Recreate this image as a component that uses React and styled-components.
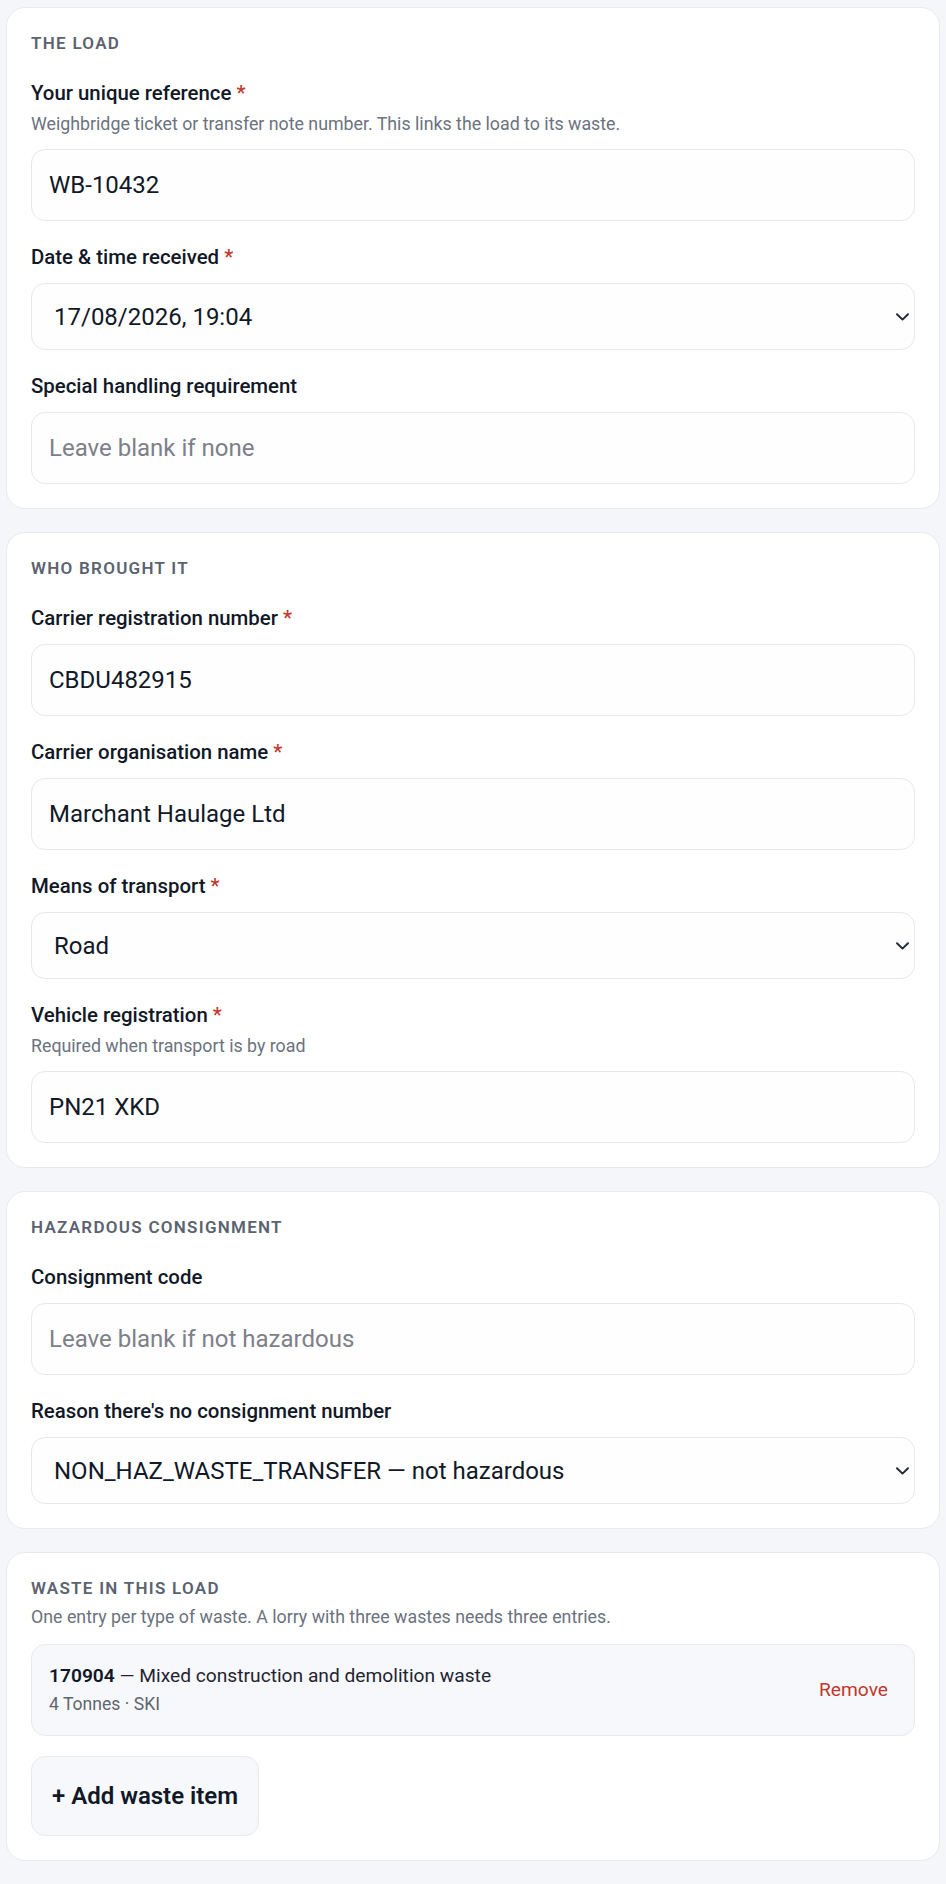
import React from 'react'
import styled, { createGlobalStyle } from 'styled-components'

const GlobalStyle = createGlobalStyle`
    * { box-sizing: border-box; }
    body {
        margin: 0;
        background: #f5f6fa;
        font-family: Roboto, "Liberation Sans", Arial, sans-serif;
        color: #111827;
    }
`

function Chevron() {
    return (
        <svg width="13" height="8" viewBox="0 0 13 8" fill="none">
            <path d="M1 1.2L6.5 6.6L12 1.2" stroke="#1f2937" strokeWidth="1.9" strokeLinecap="round" strokeLinejoin="round" />
        </svg>
    )
}

function Field({ label, required, hint, children }) {
    return (
        <FieldStyled>
            <Label>
                {label}
                {required && <Req> *</Req>}
            </Label>
            {hint && <Hint>{hint}</Hint>}
            <Control>{children}</Control>
        </FieldStyled>
    )
}

function SelectBox({ value }) {
    return (
        <SelectWrap>
            <Select defaultValue={value}>
                <option value={value}>{value}</option>
            </Select>
            <ChevronSlot><Chevron /></ChevronSlot>
        </SelectWrap>
    )
}

function App() {
    return (
        <Page>
            <GlobalStyle />
            <Card>
                <CardTitle>The load</CardTitle>
                <Fields>
                    <Field label="Your unique reference" required hint="Weighbridge ticket or transfer note number. This links the load to its waste.">
                        <Input defaultValue="WB-10432" />
                    </Field>
                    <Field label="Date & time received" required>
                        <SelectBox value="17/08/2026, 19:04" />
                    </Field>
                    <Field label="Special handling requirement">
                        <Input placeholder="Leave blank if none" />
                    </Field>
                </Fields>
            </Card>

            <Card>
                <CardTitle>Who brought it</CardTitle>
                <Fields>
                    <Field label="Carrier registration number" required>
                        <Input defaultValue="CBDU482915" />
                    </Field>
                    <Field label="Carrier organisation name" required>
                        <Input defaultValue="Marchant Haulage Ltd" />
                    </Field>
                    <Field label="Means of transport" required>
                        <SelectBox value="Road" />
                    </Field>
                    <Field label="Vehicle registration" required hint="Required when transport is by road">
                        <Input defaultValue="PN21 XKD" />
                    </Field>
                </Fields>
            </Card>

            <Card>
                <CardTitle>Hazardous consignment</CardTitle>
                <Fields>
                    <Field label="Consignment code">
                        <Input placeholder="Leave blank if not hazardous" />
                    </Field>
                    <Field label="Reason there's no consignment number">
                        <SelectBox value="NON_HAZ_WASTE_TRANSFER — not hazardous" />
                    </Field>
                </Fields>
            </Card>

            <Card>
                <CardTitle $tight>Waste in this load</CardTitle>
                <CardHint>One entry per type of waste. A lorry with three wastes needs three entries.</CardHint>
                <WasteItem>
                    <WasteInfo>
                        <WasteName><strong>170904</strong> — Mixed construction and demolition waste</WasteName>
                        <WasteMeta>4 Tonnes · SKI</WasteMeta>
                    </WasteInfo>
                    <RemoveButton type="button">Remove</RemoveButton>
                </WasteItem>
                <AddButton type="button">+ Add waste item</AddButton>
            </Card>
        </Page>
    )
}

const Page = styled.div`
    padding: 7px 6px 23px;
    display: flex;
    flex-direction: column;
    gap: 23px;
`

const Card = styled.section`
    background: #ffffff;
    border: 1px solid #e8eaf0;
    border-radius: 19px;
    padding: 24px;
    display: flex;
    flex-direction: column;
    align-items: flex-start;
`

const CardTitle = styled.h2`
    margin: 1px 0 ${p => (p.$tight ? '8px' : '28px')};
    font-size: 17px;
    line-height: 20px;
    font-weight: 600;
    letter-spacing: 0.075em;
    text-transform: uppercase;
    color: #5b6270;
`

const CardHint = styled.p`
    margin: 0 0 16px;
    font-size: 17.8px;
    line-height: 22px;
    color: #6b7280;
`

const Fields = styled.div`
    align-self: stretch;
    display: flex;
    flex-direction: column;
    gap: 24px;
`

const FieldStyled = styled.div`
    display: flex;
    flex-direction: column;
`

const Label = styled.label`
    font-size: 20.4px;
    line-height: 24px;
    font-weight: 500;
    color: #111827;
`

const Req = styled.span`
    color: #c0392b;
`

const Hint = styled.div`
    margin-top: 8px;
    font-size: 17.8px;
    line-height: 22px;
    color: #6b7280;
`

const Control = styled.div`
    margin-top: 14px;
`

const Input = styled.input`
    display: block;
    width: 100%;
    height: 72px;
    padding: 0 17px;
    border: 1px solid #e6e8ee;
    border-radius: 14px;
    background: #fefefe;
    font-family: Roboto, "Liberation Sans", Arial, sans-serif;
    font-size: 24px;
    color: #111827;
    outline: none;
    &::placeholder {
        color: #7d8089;
    }
`

const SelectWrap = styled.div`
    position: relative;
`

const Select = styled.select`
    display: block;
    width: 100%;
    height: 67px;
    padding: 0 40px 0 22px;
    border: 1px solid #e6e8ee;
    border-radius: 14px;
    background: #fefefe;
    font-family: Roboto, "Liberation Sans", Arial, sans-serif;
    font-size: 24px;
    color: #111827;
    appearance: none;
    -webkit-appearance: none;
    outline: none;
`

const ChevronSlot = styled.span`
    position: absolute;
    right: 6px;
    top: 50%;
    transform: translateY(-50%);
    display: flex;
    pointer-events: none;
    & > svg { display: block; }
`

const WasteItem = styled.div`
    align-self: stretch;
    display: flex;
    align-items: center;
    justify-content: space-between;
    padding: 19px 18px 20px 17px;
    background: #f7f8fb;
    border: 1px solid #e8eaf0;
    border-radius: 14px;
`

const WasteInfo = styled.div`
    display: flex;
    flex-direction: column;
    gap: 5px;
`

const WasteName = styled.div`
    font-size: 19.2px;
    line-height: 24px;
    color: #1f2430;
    strong {
        font-weight: 600;
        color: #111827;
    }
`

const WasteMeta = styled.div`
    font-size: 17.6px;
    line-height: 22px;
    color: #5f6570;
`

const RemoveButton = styled.button`
    background: none;
    border: none;
    padding: 8px;
    font-family: Roboto, "Liberation Sans", Arial, sans-serif;
    font-size: 19.2px;
    color: #c0392b;
    cursor: pointer;
`

const AddButton = styled.button`
    margin-top: 20px;
    padding: 25px 20px;
    background: #f7f8fb;
    border: 1px solid #e8eaf0;
    border-radius: 14px;
    font-family: Roboto, "Liberation Sans", Arial, sans-serif;
    font-size: 24px;
    line-height: 28px;
    font-weight: 600;
    color: #111827;
    cursor: pointer;
`

export default App
